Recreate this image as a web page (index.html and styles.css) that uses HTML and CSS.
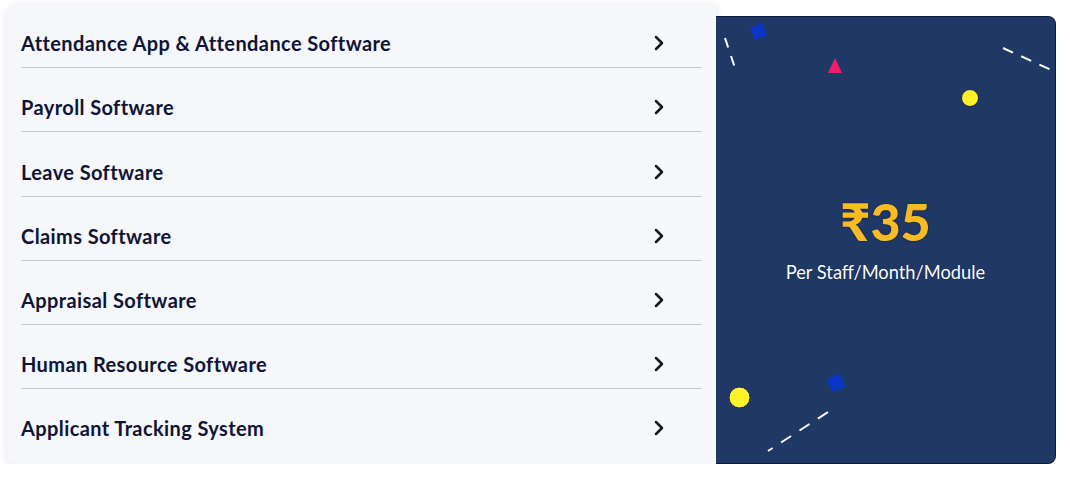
FILE: index.html
```html
<!DOCTYPE html>
<html>
<head>
<meta charset="utf-8">
<link rel="stylesheet" href="styles.css">
</head>
<body>
<div class="wrap">
  <div class="menu">
    <div class="row"><span>Attendance App &amp; Attendance Software</span><svg class="chev" viewBox="0 0 10 16"><path d="M2 2l6 6-6 6"/></svg></div>
    <div class="row"><span>Payroll Software</span><svg class="chev" viewBox="0 0 10 16"><path d="M2 2l6 6-6 6"/></svg></div>
    <div class="row"><span>Leave Software</span><svg class="chev" viewBox="0 0 10 16"><path d="M2 2l6 6-6 6"/></svg></div>
    <div class="row"><span>Claims Software</span><svg class="chev" viewBox="0 0 10 16"><path d="M2 2l6 6-6 6"/></svg></div>
    <div class="row"><span>Appraisal Software</span><svg class="chev" viewBox="0 0 10 16"><path d="M2 2l6 6-6 6"/></svg></div>
    <div class="row"><span>Human Resource Software</span><svg class="chev" viewBox="0 0 10 16"><path d="M2 2l6 6-6 6"/></svg></div>
    <div class="row"><span>Applicant Tracking System</span><svg class="chev" viewBox="0 0 10 16"><path d="M2 2l6 6-6 6"/></svg></div>
  </div>
  <div class="promo">
    <svg class="deco" viewBox="0 0 340 448" width="340" height="448">
      <rect x="-6.5" y="-6.5" width="13" height="13" fill="#0a36c8" transform="translate(42.5 14.5) rotate(-22)"/>
      <path d="M9 21 L21 57" stroke="#fff" stroke-width="2" stroke-dasharray="10 9" fill="none"/>
      <polygon points="119,41 126,56 112,56" fill="#ef1f68"/>
      <circle cx="254" cy="81" r="8.5" fill="#fff22a" stroke="#16254a" stroke-width="1"/>
      <path d="M287 31 L342 56" stroke="#fff" stroke-width="2" stroke-dasharray="11 9" fill="none"/>
      <circle cx="23.5" cy="380.5" r="10.5" fill="#fff22a" stroke="#16254a" stroke-width="1"/>
      <rect x="-7" y="-7" width="14" height="14" fill="#0a36c8" transform="translate(120 366) rotate(-25)"/>
      <path d="M112 395 L52 434" stroke="#fff" stroke-width="2" stroke-dasharray="12 10" fill="none"/>
    </svg>
    <div class="price">₹35</div>
    <div class="unit">Per Staff/Month/Module</div>
  </div>
</div>
</body>
</html>
```
FILE: styles.css
```css
* { box-sizing: border-box; }
body {
  margin: 0;
  background: #ffffff;
  font-family: Lato, "Noto Sans", sans-serif;
}
.wrap {
  display: flex;
  align-items: flex-start;
  padding: 4px 0 0 7px;
}
.menu {
  width: 709px;
  height: 460px;
  background: #f6f7fb;
  border-radius: 10px 0 0 10px;
  box-shadow: 0 2px 8px rgba(20, 30, 60, 0.12);
  padding: 0 14px 12px 14px;
  display: flex;
  flex-direction: column;
}
.row {
  display: flex;
  align-items: center;
  justify-content: space-between;
  padding: 27.2px 38px 12px 0;
  line-height: 24px;
  border-bottom: 1px solid #c9cad0;
  font-size: 20px;
  letter-spacing: 0.4px;
  font-weight: 700;
  color: #0e1436;
}
.row:last-child { border-bottom: none; }
.chev {
  width: 10px;
  height: 16px;
  fill: none;
  stroke: #15161c;
  stroke-width: 2.5;
  stroke-linecap: round;
  stroke-linejoin: round;
}
.promo {
  position: relative;
  margin-top: 12px;
  width: 340px;
  height: 448px;
  background: #1f3866;
  border: 1px solid #0c1a3c;
  border-left: none;
  border-radius: 0 8px 8px 0;
  overflow: hidden;
  display: flex;
  flex-direction: column;
  align-items: center;
  padding-top: 176px;
}
.deco {
  position: absolute;
  left: 0;
  top: 0;
}
.price {
  position: relative;
  font-size: 52px;
  font-weight: 900;
  color: #f8bb23;
  line-height: 56px;
  text-shadow: 0 0 2px #0d1a3a;
}
.unit {
  position: relative;
  margin-top: 12px;
  font-size: 18.3px;
  color: #ffffff;
  line-height: 22px;
  text-shadow: 0 0 1px #0d1a3a;
}
```
